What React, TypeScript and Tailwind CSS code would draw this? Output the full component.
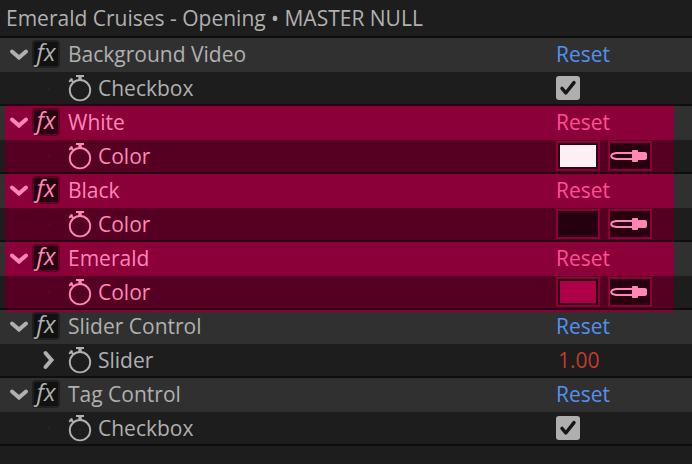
import React, { useState } from 'react';
import clsx from 'clsx';

type Effect = {
  name: string;
  property: string;
  control: 'checkbox' | 'color' | 'slider';
  value?: string;
  highlighted?: boolean;
};

const initialEffects: Effect[] = [
  { name: 'Background Video', property: 'Checkbox', control: 'checkbox' },
  { name: 'White', property: 'Color', control: 'color', value: '#fff0f5', highlighted: true },
  { name: 'Black', property: 'Color', control: 'color', value: '#25000f', highlighted: true },
  { name: 'Emerald', property: 'Color', control: 'color', value: '#ad0046', highlighted: true },
  { name: 'Slider Control', property: 'Slider', control: 'slider', value: '1.00' },
  { name: 'Tag Control', property: 'Checkbox', control: 'checkbox' },
];

const Chevron = ({ className }: { className?: string }) => (
  <svg viewBox="0 0 18 10" className={clsx('h-[10px] w-[18px] overflow-visible', className)} fill="none" stroke="currentColor" strokeWidth="4" strokeLinecap="round">
    <path d="M2 2.5 L9 8.5 L16 2.5" />
  </svg>
);

const Stopwatch = () => (
  <svg viewBox="0 0 24 28" className="h-7 w-6 shrink-0" fill="none" stroke="currentColor">
    <circle cx="12" cy="16.2" r="10.2" strokeWidth="1.9" />
    <path d="M8 2 H16" strokeWidth="2" />
    <path d="M12 2.5 V6" strokeWidth="3.4" />
    <path d="M2.2 5 L5.6 8.4 M1.2 7.8 L4.4 4.6" strokeWidth="2" />
  </svg>
);

const Eyedropper = () => (
  <svg viewBox="0 0 38 12" className="h-3 w-[38px] shrink-0" stroke="currentColor">
    <path d="M22 3 H6 L2.5 4 Q0 6 2.5 8 L6 9 H22" fill="none" strokeWidth="2.2" strokeLinejoin="round" />
    <path d="M22 1 Q22 0 23 0 H27 Q28 0 28 1 V2 H35 Q37 2 37 4 V8 Q37 10 35 10 H28 V11 Q28 12 27 12 H23 Q22 12 22 11 Z" fill="currentColor" stroke="none" />
  </svg>
);

const Control = ({ effect }: { effect: Effect }) => {
  const label = `${effect.name} ${effect.property}`;
  if (effect.control === 'checkbox') {
    return (
      <span className="relative block h-6 w-6">
        <input type="checkbox" defaultChecked aria-label={label} className="peer block h-6 w-6 appearance-none rounded-[3px] bg-[#afafaf]" />
        <svg viewBox="0 0 24 24" className="pointer-events-none absolute inset-0 hidden h-6 w-6 peer-checked:block" fill="none" stroke="#161616" strokeWidth="3.4" strokeLinecap="round" strokeLinejoin="round">
          <path d="M6 12.4 L9.8 17 L18 6.6" />
        </svg>
      </span>
    );
  }
  if (effect.control === 'color') {
    return (
      <div className="flex gap-2">
        <input
          type="color"
          defaultValue={effect.value}
          aria-label={label}
          className="h-[30px] w-11 appearance-none border-2 border-[#8c0039] bg-[#2d0012] p-0.5 [&::-webkit-color-swatch]:border-0 [&::-webkit-color-swatch-wrapper]:p-0"
        />
        <button aria-label={`Pick ${label}`} className="flex h-[30px] w-11 items-center border-2 border-[#8c0039] bg-[#28000f] text-[#ff87b8]">
          <Eyedropper />
        </button>
      </div>
    );
  }
  return <input type="text" defaultValue={effect.value} aria-label={label} className="w-16 bg-transparent pl-0.5 text-[#c33b2e]" />;
};

const EffectGroup = ({ effect, afterHighlight }: { effect: Effect; afterHighlight: boolean }) => {
  const [open, setOpen] = useState(true);
  const pink = effect.highlighted;

  return (
    <section className="relative">
      <div className="bg-[#0e0e0e] pr-[18px] pl-[5px]">
        <div className={clsx('h-0.5', pink && 'bg-[#2b0011]')} />
      </div>
      {afterHighlight && <div className="absolute top-0 right-[18px] left-[5px] h-1 border-t-2 border-[#2b0011] bg-[#8c0039]" />}

      <div className="bg-[#303030] pr-[18px] pl-[5px]">
        <div className={clsx('flex h-[34px] items-center pb-0.5 pl-[5px]', pink ? 'bg-[#8c0039] text-[#ff87b8]' : 'text-[#b0b0b0]')}>
          <button aria-label={`Toggle ${effect.name}`} aria-expanded={open} onClick={() => setOpen(!open)} className="mr-1">
            <Chevron className={clsx(!open && '-rotate-90')} />
          </button>
          <span className={clsx('mr-2 flex h-7 w-7 items-center justify-center rounded border-2 pb-1 text-2xl leading-6 font-normal italic', pink ? 'border-[#5f0027] bg-[#28000f]' : 'border-[#202020] bg-[#111111]')}>
            fx
          </span>
          <h2 className="flex-1">{effect.name}</h2>
          <div className="w-[118px]">
            <button className={pink ? 'text-[#ff4f97]' : 'text-[#5590f0]'}>Reset</button>
          </div>
        </div>
      </div>

      {open && (
        <div className="bg-[#1d1d1d] pr-[18px] pl-[5px]">
          <div className={clsx('flex h-8 items-center pl-[35px]', pink ? 'bg-[#550022] text-[#ff87b8]' : 'text-[#b0b0b0]')}>
            <div className="mr-3 flex w-4 justify-center">
              {effect.control === 'slider' ? (
                <button aria-label="Expand Slider">
                  <Chevron className="-rotate-90" />
                </button>
              ) : (
                <span className={clsx('h-[3px] w-[3px] rounded-full', pink ? 'bg-[#640029]' : 'bg-[#262626]')} />
              )}
            </div>
            <Stopwatch />
            <span className="flex-1 pl-1.5">{effect.property}</span>
            <div className="w-[118px]">
              <Control effect={effect} />
            </div>
          </div>
        </div>
      )}
    </section>
  );
};

const App = () => {
  return (
    <main className="min-h-screen bg-[#1d1d1d] font-['Open_Sans','Noto_Sans',sans-serif] text-[21px] leading-7 font-medium">
      <h1 className="px-1.5 py-1 text-[#b0b0b0]">Emerald Cruises - Opening • MASTER NULL</h1>
      {initialEffects.map((effect, index) => (
        <EffectGroup
          key={effect.name}
          effect={effect}
          afterHighlight={!effect.highlighted && !!initialEffects[index - 1]?.highlighted}
        />
      ))}
      <div className="h-0.5 bg-[#0e0e0e]" />
    </main>
  );
};

export default App;
